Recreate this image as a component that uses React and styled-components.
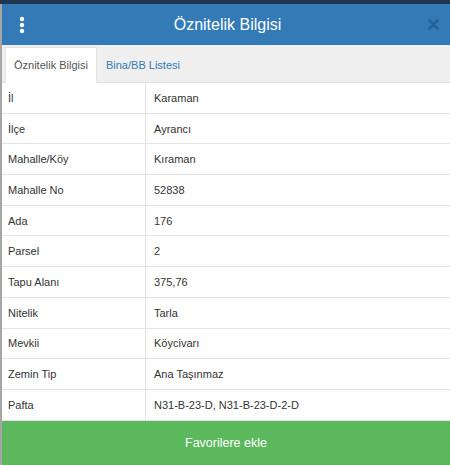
import { useState } from 'react';
import styled, { createGlobalStyle } from 'styled-components';

const GlobalStyle = createGlobalStyle`
  html, body {
    margin: 0;
    padding: 0;
    background: #1f3550;
    font-family: 'Liberation Sans', Arial, sans-serif;
  }
`;

const Panel = styled.div`
  width: 450px;
  height: 461px;
  margin-top: 4px;
  display: flex;
  flex-direction: column;
  background: #fff;
  border-left: 2px solid rgba(0, 0, 0, 0.35);
  box-sizing: border-box;
  overflow: hidden;
`;

const Header = styled.header`
  height: 41px;
  flex: none;
  display: flex;
  align-items: center;
  justify-content: space-between;
  padding: 0 7px 0 10px;
  background: #337ab7;
  color: #fff;
`;

const Title = styled.h1`
  margin: 0;
  font-size: 16px;
  font-weight: 400;
`;

const IconButton = styled.button`
  width: 20px;
  height: 20px;
  padding: 0;
  border: none;
  background: transparent;
  display: flex;
  align-items: center;
  justify-content: center;
  color: ${p => p.$muted ? '#1d5a8c' : '#fff'};
  opacity: ${p => p.$muted ? 0.7 : 1};
`;

const TabBar = styled.nav`
  height: 37px;
  flex: none;
  display: flex;
  align-items: flex-end;
  padding-left: 3px;
  background: #efefef;
  border-bottom: 1px solid #e2e2e2;
`;

const Tab = styled.div`
  height: 34px;
  display: flex;
  align-items: center;
  padding: 0 8px;
  margin-bottom: -1px;
  font-size: 11px;
  color: ${p => p.$active ? '#555' : '#337ab7'};
  background: ${p => p.$active ? '#fff' : 'transparent'};
  border: 1px solid ${p => p.$active ? '#e2e2e2' : 'transparent'};
  border-bottom-color: ${p => p.$active ? '#fff' : 'transparent'};
  cursor: pointer;
`;

const Table = styled.div`
  flex: 1;
  display: flex;
  flex-direction: column;
`;

const Row = styled.div`
  display: grid;
  grid-template-columns: 143px 1fr;
  height: 30.7px;
  box-sizing: border-box;
  border-bottom: 1px solid #e4e4e4;
  font-size: 11px;
  color: #333;
`;

const Cell = styled.div`
  display: flex;
  align-items: center;
  padding-left: ${p => p.$value ? '8px' : '6px'};
  border-left: ${p => p.$value ? '1px solid #e4e4e4' : 'none'};
`;

const AddButton = styled.button`
  height: 44px;
  flex: none;
  border: none;
  background: #5cb85c;
  color: #fff;
  font-family: inherit;
  font-size: 12.5px;
  cursor: pointer;
`;

const rows = [
  ['İl', 'Karaman'],
  ['İlçe', 'Ayrancı'],
  ['Mahalle/Köy', 'Kıraman'],
  ['Mahalle No', '52838'],
  ['Ada', '176'],
  ['Parsel', '2'],
  ['Tapu Alanı', '375,76'],
  ['Nitelik', 'Tarla'],
  ['Mevkii', 'Köycivarı'],
  ['Zemin Tip', 'Ana Taşınmaz'],
  ['Pafta', 'N31-B-23-D, N31-B-23-D-2-D'],
];

function Kebab() {
  return (
    <svg width="6" height="18" viewBox="0 0 6 18">
      <circle cx="3" cy="3" r="2.2" fill="currentColor" />
      <circle cx="3" cy="9" r="2.2" fill="currentColor" />
      <circle cx="3" cy="15" r="2.2" fill="currentColor" />
    </svg>
  );
}

function Close() {
  return (
    <svg width="11" height="11" viewBox="0 0 11 11">
      <path d="M1.5 1.5 L9.5 9.5 M9.5 1.5 L1.5 9.5" stroke="currentColor" strokeWidth="2.6" strokeLinecap="round" />
    </svg>
  );
}

export default function App() {
  const [tab, setTab] = useState(0);

  return (
    <>
      <GlobalStyle />
      <Panel>
        <Header>
          <IconButton><Kebab /></IconButton>
          <Title>Öznitelik Bilgisi</Title>
          <IconButton $muted><Close /></IconButton>
        </Header>

        <TabBar>
          <Tab $active={tab === 0} onClick={() => setTab(0)}>Öznitelik Bilgisi</Tab>
          <Tab $active={tab === 1} onClick={() => setTab(1)}>Bina/BB Listesi</Tab>
        </TabBar>

        <Table>
          {rows.map(([label, value]) => (
            <Row key={label}>
              <Cell>{label}</Cell>
              <Cell $value>{value}</Cell>
            </Row>
          ))}
        </Table>

        <AddButton>Favorilere ekle</AddButton>
      </Panel>
    </>
  );
}
